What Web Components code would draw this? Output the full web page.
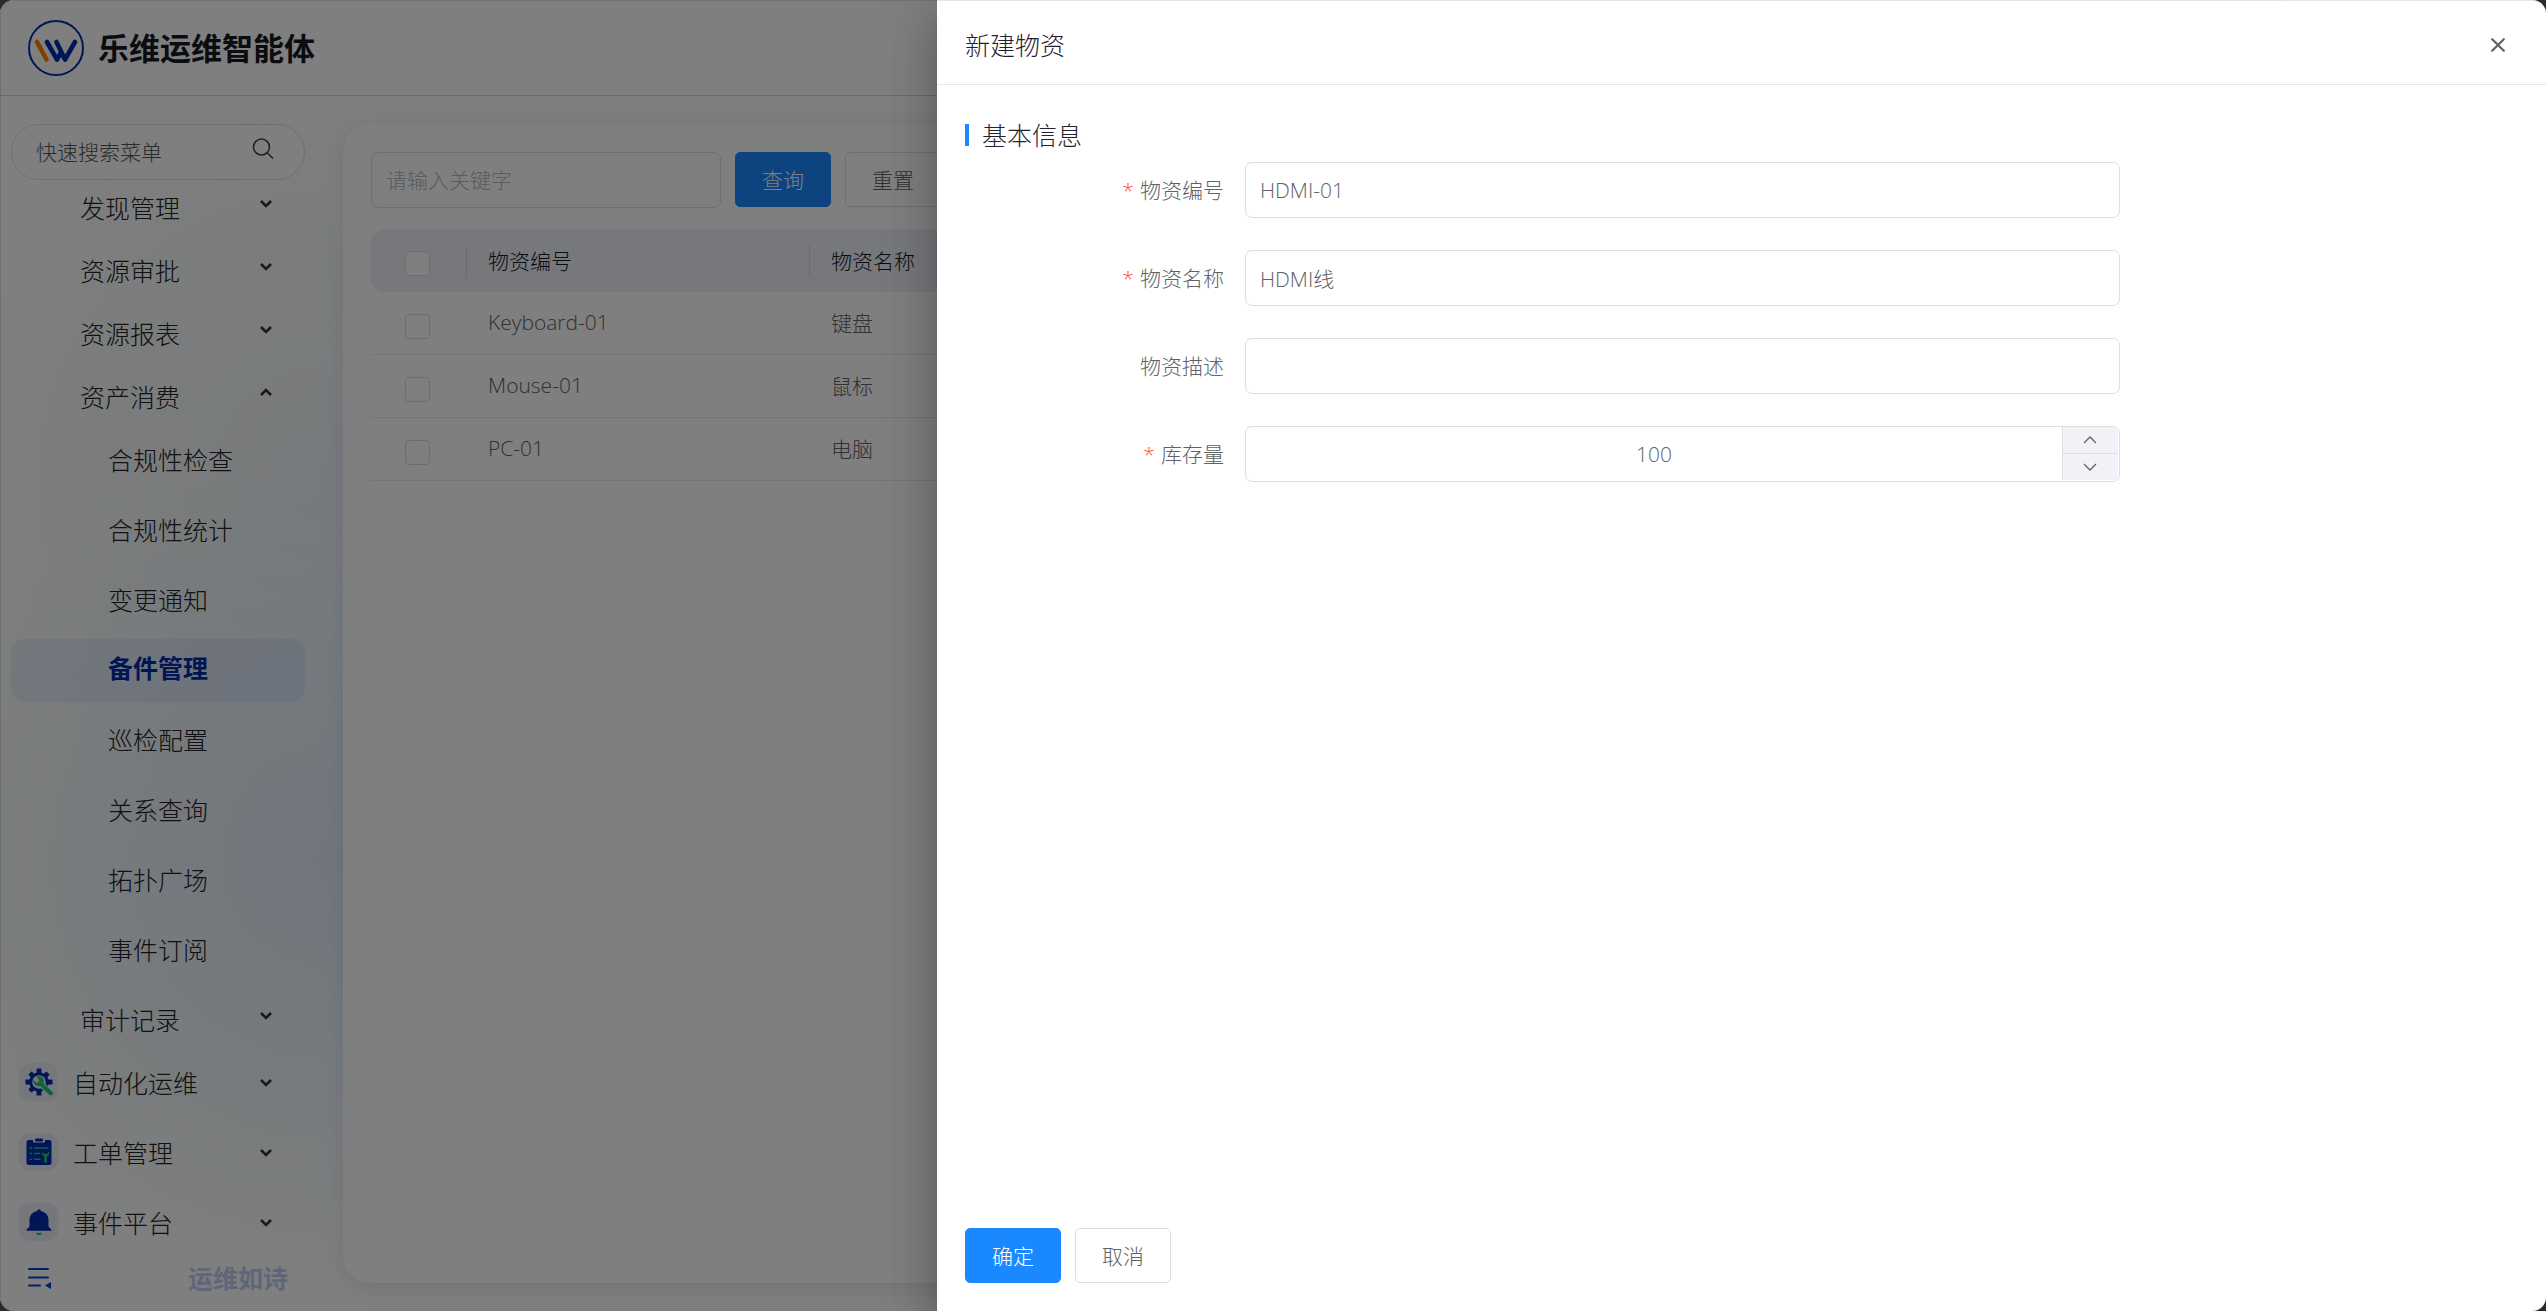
<!DOCTYPE html>
<html lang="zh-CN">
<head>
<meta charset="UTF-8">
<meta name="viewport" content="width=device-width, initial-scale=1.0">
<title>乐维运维智能体</title>
<style>
  :root {
    --primary: #1a88ff;
    --brand: #002cac;
    --accent: #1ec878;
    --tile: #eceefa;
    --border: #dcdee0;
    --text: #606266;
    --text-dark: #1f2330;
    --fs: 21px;
    --fs-lg: 25px;
  }
  html, body {
    margin: 0;
    height: 100%;
    background: #2b2b2b;
  }
  body {
    font-family: "Open Sans", "Noto Sans CJK SC", sans-serif;
    font-weight: 300;
    font-size: var(--fs);
    color: var(--text);
  }
</style>
</head>
<body>

<app-shell>
  <app-header slot="header"></app-header>
  <side-nav slot="nav">
    <nav-item level="2" arrow="down">发现管理</nav-item>
    <nav-item level="2" arrow="down">资源审批</nav-item>
    <nav-item level="2" arrow="down">资源报表</nav-item>
    <nav-item level="2" arrow="up">资产消费</nav-item>
    <nav-item level="3">合规性检查</nav-item>
    <nav-item level="3">合规性统计</nav-item>
    <nav-item level="3">变更通知</nav-item>
    <nav-item level="3" active>备件管理</nav-item>
    <nav-item level="3">巡检配置</nav-item>
    <nav-item level="3">关系查询</nav-item>
    <nav-item level="3">拓扑广场</nav-item>
    <nav-item level="3">事件订阅</nav-item>
    <nav-item level="2" arrow="down">审计记录</nav-item>
    <nav-item level="1" arrow="down" icon="gear">自动化运维</nav-item>
    <nav-item level="1" arrow="down" icon="order">工单管理</nav-item>
    <nav-item level="1" arrow="down" icon="bell">事件平台</nav-item>
  </side-nav>
  <stock-page></stock-page>
  <side-drawer slot="drawer" heading="新建物资">
    <form-section heading="基本信息">
      <form-field label="物资编号" value="HDMI-01" required></form-field>
      <form-field label="物资名称" value="HDMI线" required></form-field>
      <form-field label="物资描述"></form-field>
      <form-field label="库存量" value="100" type="number" required></form-field>
    </form-section>
    <ui-button slot="footer" type="primary">确定</ui-button>
    <ui-button slot="footer">取消</ui-button>
  </side-drawer>
</app-shell>

<script>
// Small base class: every component renders its markup once into a shadow root
class BaseElement extends HTMLElement {
  connectedCallback() {
    if (this.shadowRoot) return;
    this.attachShadow({ mode: "open" });
    this.shadowRoot.innerHTML = this.render();
  }
}

const NAV_ICONS = {
  gear: `
    <svg viewBox="0 0 28 28" width="28" height="28">
      <g fill="var(--brand)">
        <circle cx="14" cy="14" r="9.8"/>
        <rect x="11.6" y="0.5" width="4.8" height="27" rx="0.6"/>
        <rect x="0.5" y="11.6" width="27" height="4.8" rx="0.6"/>
        <rect x="11.6" y="1.2" width="4.8" height="25.6" rx="0.6" transform="rotate(45 14 14)"/>
        <rect x="11.6" y="1.2" width="4.8" height="25.6" rx="0.6" transform="rotate(135 14 14)"/>
      </g>
      <circle cx="14" cy="14" r="6.8" fill="var(--tile)"/>
      <path d="M15 15L26 25.600" stroke="var(--tile)" stroke-width="6.400"/>
      <path d="M15 15L25.600 25.200" stroke="var(--accent)" stroke-width="4.400" stroke-linecap="round"/>
      <path d="M11.300 8.900l3.200 3-.6 2.400-2.500.5-2.900-3c-.7 3.200 1.500 6.200 4.700 6.300 3.300.2 6-2.300 5.800-5.500-.2-3.200-3.900-5.300-7.700-3.700z" fill="var(--accent)"/>
    </svg>`,
  order: `
    <svg viewBox="0 0 28 28" width="28" height="28">
      <rect x="1.500" y="2" width="25" height="25" rx="2.500" fill="var(--brand)"/>
      <path d="M8 1.200h12v2a1.200 1.200 0 0 1-1.200 1.200H9.200a1.200 1.200 0 0 1-1.200-1.200z" fill="var(--tile)"/>
      <rect x="10" y="0.600" width="8" height="2.800" rx="1" fill="var(--brand)"/>
      <g stroke="var(--accent)" stroke-width="1.500" fill="none">
        <path d="M4.500 10h2.600M9 10h14.500M4.500 15.600h2.600M9 15.600h6.500M4.500 21.200h2.600M9 21.200h6.500"/>
      </g>
      <path d="M17 13.500c-.5 2.500.7 4.300 2.300 5v5.200a1.200 1.200 0 0 0 2.600 0v-5.200c1.700-.8 2.700-2.600 2.200-5l-1.900 2.300h-3.200z" fill="var(--accent)"/>
    </svg>`,
  bell: `
    <svg viewBox="0 0 28 28" width="28" height="28">
      <path d="M14 1.200a1.800 1.800 0 0 1 1.800 1.900c4.600.9 7.700 4.300 7.700 9v6.500l2.800 3c.5.600.2 1.200-.6 1.200H2.300c-.8 0-1.100-.6-.6-1.200l2.800-3v-6.500c0-4.700 3.100-8.100 7.700-9A1.800 1.800 0 0 1 14 1.200z" fill="var(--brand)"/>
      <path d="M11 24.800h6c-.3 1.600-1.400 2.500-3 2.500s-2.700-.9-3-2.500z" fill="var(--accent)"/>
    </svg>`
};

class AppShell extends BaseElement {
  render() {
    return `
      <style>
        :host {
          display: grid;
          grid-template-rows: auto 1fr;
          height: 100vh;
          position: relative;
          overflow: hidden;
          border-radius: 14px;
          background:
            radial-gradient(circle at 330px 860px, #e2ecfb 0, rgba(230, 240, 250, 0.7) 180px, rgba(242, 248, 252, 0) 420px),
            radial-gradient(circle at 330px 480px, #eff5f8 0, rgba(244, 250, 251, 0) 380px),
            #fcfefc;
        }
        .body {
          display: flex;
          min-height: 0;
        }
        main {
          flex: 1;
          min-width: 0;
          display: flex;
          padding: 28px 28px 28px 0;
        }
        ::slotted(stock-page) {
          flex: 1;
        }
        .mask {
          position: absolute;
          inset: 0;
          background: rgba(0, 0, 0, 0.5);
          display: flex;
          justify-content: flex-end;
        }
        .frame {
          position: absolute;
          inset: 0;
          border: 1px solid rgba(0, 0, 0, 0.1);
          border-right: 0;
          border-bottom: 0;
          border-radius: 14px;
          pointer-events: none;
        }
      </style>
      <slot name="header"></slot>
      <div class="body">
        <slot name="nav"></slot>
        <main><slot></slot></main>
      </div>
      <div class="mask"><slot name="drawer"></slot></div>
      <div class="frame"></div>
    `;
  }
}

class AppHeader extends BaseElement {
  render() {
    return `
      <style>
        :host { display: block; }
        header {
          display: flex;
          align-items: center;
          gap: 14px;
          height: 95px;
          padding: 0 28px;
          border-bottom: 1px solid #d2d5d6;
        }
        h1 {
          margin: 0;
          font-size: 31px;
          font-weight: 700;
          line-height: 44px;
          color: #16191f;
        }
        svg { display: block; }
      </style>
      <header>
        <svg viewBox="0 0 56 56" width="56" height="56" fill="none" stroke-linecap="round" stroke-linejoin="round">
          <circle cx="28" cy="28" r="27" stroke="var(--brand)" stroke-width="2"/>
          <path d="M9 22l9.500 17.500" stroke="#ff8000" stroke-width="4.600"/>
          <path d="M19 22l10 17.500M28.500 22l8.500 17.500M29 39.500l4-7M37 39.500l10-17.500" stroke="var(--brand)" stroke-width="4.600"/>
        </svg>
        <h1>乐维运维智能体</h1>
      </header>
    `;
  }
}

class SideNav extends BaseElement {
  render() {
    return `
      <style>
        :host {
          display: flex;
          flex-direction: column;
          flex: none;
          width: 343px;
          min-height: 0;
        }
        .search {
          display: flex;
          align-items: center;
          box-sizing: border-box;
          height: 56px;
          margin: 28px 38px 0 11px;
          padding: 0 30px 0 24px;
          border: 1px solid var(--border);
          border-radius: 28px;
          background: #fff;
          flex: none;
        }
        .search input {
          flex: 1;
          min-width: 0;
          border: 0;
          padding: 0;
          outline: 0;
          background: none;
          font: inherit;
          color: #555;
        }
        .search input::placeholder { color: #555; opacity: 1; }
        .search svg { margin-bottom: 6px; }
        nav {
          flex: 1;
          min-height: 0;
          overflow: hidden;
          display: flex;
          flex-direction: column;
          justify-content: flex-end;
          padding: 0 38px 0 11px;
        }
        footer {
          display: flex;
          align-items: center;
          justify-content: space-between;
          height: 32px;
          padding: 0 55px 17px 28px;
        }
        footer button {
          border: 0;
          padding: 0;
          background: none;
          line-height: 0;
        }
        footer a {
          font-size: var(--fs-lg);
          font-weight: 700;
          line-height: 32px;
          color: #c0cdf2;
          text-decoration: none;
        }
      </style>
      <div class="search">
        <input type="text" placeholder="快速搜索菜单" aria-label="快速搜索菜单">
        <svg viewBox="0 0 22 22" width="22" height="22" fill="none" stroke="#444" stroke-width="1.600">
          <circle cx="9.500" cy="9" r="8"/>
          <path d="M15.200 14.700L21 20.500"/>
        </svg>
      </div>
      <nav><slot></slot></nav>
      <footer>
        <button type="button" aria-label="收起菜单">
          <svg viewBox="0 0 24 22" width="24" height="22" fill="none" stroke="#0040d0" stroke-width="2" stroke-linecap="round">
            <path d="M1 2h19M1 10.500h19M1 18.500h11"/>
            <path d="M23 15v7l-6-3.500z" fill="#0040d0" stroke="none"/>
          </svg>
        </button>
        <a href="#">运维如诗</a>
      </footer>
    `;
  }
}

class NavItem extends BaseElement {
  render() {
    const level = this.getAttribute("level");
    const arrow = this.getAttribute("arrow");
    const icon = this.getAttribute("icon");
    const path = arrow === "up" ? "M2 7l5-5 5 5" : "M2 2l5 5 5-5";
    const tag = arrow ? "button" : "a";
    const attr = arrow ? `type="button" aria-expanded="${arrow === "up"}"` : `href="#"`;
    return `
      <style>
        :host { display: block; flex: none; }
        :host([level="1"]), :host([level="3"]) { margin-bottom: 7px; }
        .item {
          display: flex;
          align-items: center;
          box-sizing: border-box;
          width: 100%;
          height: 63px;
          border: 0;
          border-radius: 14px;
          background: none;
          font: inherit;
          font-size: var(--fs-lg);
          text-align: left;
          text-decoration: none;
          color: #222;
          padding: 0 32px 0 97px;
        }
        :host([level="1"]) .item { padding-left: 8px; }
        :host([level="2"]) .item { padding-left: 69px; }
        :host([active]) .item {
          background: rgba(40, 90, 230, 0.08);
          color: #002ca8;
          font-weight: 700;
        }
        .tile {
          display: flex;
          align-items: center;
          justify-content: center;
          width: 39px;
          height: 38px;
          margin: 0 15px 4px 0;
          border-radius: 11px;
          background: var(--tile);
        }
        .label { flex: 1; padding-bottom: 4px; }
        :host([active]) .label { padding-bottom: 8px; }
        .arrow { flex: none; margin-bottom: 3px; }
        :host([level="2"]) .arrow { margin-bottom: 11px; }
      </style>
      <${tag} class="item" ${attr}>
        ${icon ? `<span class="tile">${NAV_ICONS[icon]}</span>` : ""}
        <span class="label"><slot></slot></span>
        ${arrow ? `<svg class="arrow" viewBox="0 0 14 9" width="14" height="9" fill="none" stroke="#333" stroke-width="2.600"><path d="${path}"/></svg>` : ""}
      </${tag}>
    `;
  }
}

class UiButton extends BaseElement {
  render() {
    return `
      <style>
        :host { display: inline-block; flex: none; }
        button {
          display: block;
          box-sizing: border-box;
          height: 55px;
          padding: 0 26px 2px;
          border: 1px solid var(--border);
          border-radius: 5px;
          background: #fff;
          font: inherit;
          font-size: var(--fs);
          color: var(--text);
        }
        :host([type="primary"]) button {
          border-color: var(--primary);
          background: var(--primary);
          color: #fff;
        }
      </style>
      <button type="button"><slot></slot></button>
    `;
  }
}

class StockPage extends BaseElement {
  render() {
    const rows = [
      ["Keyboard-01", "键盘"],
      ["Mouse-01", "鼠标"],
      ["PC-01", "电脑"]
    ];
    return `
      <style>
        :host {
          display: block;
          box-sizing: border-box;
          padding: 28px;
          border-radius: 28px;
          background: #fff;
          box-shadow: 0 4px 20px rgba(60, 100, 160, 0.14);
        }
        .toolbar {
          display: flex;
          gap: 14px;
          margin-bottom: 21px;
        }
        .toolbar input {
          box-sizing: border-box;
          width: 350px;
          height: 56px;
          padding: 0 14px;
          border: 1px solid var(--border);
          border-radius: 7px;
          background: #fff;
          font: inherit;
        }
        .toolbar input::placeholder { color: #b4b7bd; opacity: 1; }
        table {
          width: 100%;
          table-layout: fixed;
          border-collapse: separate;
          border-spacing: 0;
        }
        th, td {
          box-sizing: border-box;
          height: 63px;
          padding: 0 21px 2px;
          text-align: left;
          font-weight: 300;
        }
        td { border-bottom: 1px solid #e8eaec; }
        th {
          background:
            linear-gradient(#d4d7de, #d4d7de) right center / 1px 32px no-repeat,
            #eef0f9;
          color: #16191f;
        }
        th:first-child { border-radius: 14px 0 0 14px; }
        th:last-child { border-radius: 0 14px 14px 0; background: #eef0f9; }
        .check { width: 96px; padding: 3px 3px 0 0; text-align: center; }
        .check input {
          appearance: none;
          display: inline-block;
          vertical-align: middle;
          box-sizing: border-box;
          width: 25px;
          height: 25px;
          margin: 0;
          border: 1px solid #d8dade;
          border-radius: 4px;
          background: #fff;
        }
        .code { width: 343px; }
      </style>
      <div class="toolbar">
        <input type="text" placeholder="请输入关键字" aria-label="关键字">
        <ui-button type="primary">查询</ui-button>
        <ui-button>重置</ui-button>
      </div>
      <table>
        <thead>
          <tr>
            <th class="check"><input type="checkbox" aria-label="全选"></th>
            <th class="code">物资编号</th>
            <th>物资名称</th>
          </tr>
        </thead>
        <tbody>
          ${rows.map(([code, name]) => `
            <tr>
              <td class="check"><input type="checkbox" aria-label="${code}"></td>
              <td>${code}</td>
              <td>${name}</td>
            </tr>`).join("")}
        </tbody>
      </table>
    `;
  }
}

class SideDrawer extends BaseElement {
  render() {
    return `
      <style>
        :host {
          display: flex;
          flex-direction: column;
          width: 63.2%;
          background: #fff;
          box-shadow: 0 14px 18px -9px rgba(0, 0, 0, 0.2), 0 28px 42px 4px rgba(0, 0, 0, 0.14), 0 10px 52px 9px rgba(0, 0, 0, 0.12);
        }
        header {
          display: flex;
          align-items: center;
          justify-content: space-between;
          box-sizing: border-box;
          height: 85px;
          padding: 6px 41px 0 28px;
          border-bottom: 1px solid #e4e5e7;
        }
        h2 {
          margin: 0;
          font-size: var(--fs-lg);
          font-weight: 300;
          line-height: 36px;
          color: var(--text-dark);
        }
        header button {
          border: 0;
          padding: 0;
          background: none;
          line-height: 0;
        }
        .content {
          flex: 1;
          padding: 32px 41px 0 28px;
        }
        footer {
          display: flex;
          gap: 14px;
          padding: 28px;
        }
      </style>
      <header>
        <h2>${this.getAttribute("heading")}</h2>
        <button type="button" aria-label="关闭">
          <svg viewBox="0 0 14 14" width="14" height="14" fill="none" stroke="#606266" stroke-width="2.200" stroke-linecap="round">
            <path d="M1.200 1.200l11.600 11.600M12.800 1.200L1.200 12.800"/>
          </svg>
        </button>
      </header>
      <div class="content"><slot></slot></div>
      <footer><slot name="footer"></slot></footer>
    `;
  }
}

class FormSection extends BaseElement {
  render() {
    return `
      <style>
        :host { display: block; }
        h3 {
          display: flex;
          align-items: center;
          gap: 13px;
          margin: 0 0 9px;
          font-size: var(--fs-lg);
          font-weight: 300;
          line-height: 36px;
          color: var(--text-dark);
        }
        h3::before {
          content: "";
          width: 4px;
          height: 22px;
          background: var(--primary);
        }
        .rows {
          display: flex;
          flex-direction: column;
          gap: 32px;
          width: 75%;
        }
      </style>
      <h3>${this.getAttribute("heading")}</h3>
      <div class="rows"><slot></slot></div>
    `;
  }
}

class FormField extends BaseElement {
  render() {
    const value = this.getAttribute("value") || "";
    const isNumber = this.getAttribute("type") === "number";
    const chevron = (d) => `<svg viewBox="0 0 14 8" width="14" height="8" fill="none" stroke="#606266" stroke-width="1.300"><path d="${d}"/></svg>`;
    return `
      <style>
        :host { display: flex; align-items: center; }
        label {
          box-sizing: border-box;
          flex: none;
          width: 280px;
          padding: 0 21px 2px 0;
          text-align: right;
        }
        :host([required]) label::before {
          content: "*";
          margin-right: 6px;
          color: #ff4a3d;
        }
        .box {
          display: flex;
          flex: 1;
          min-width: 0;
          box-sizing: border-box;
          height: 56px;
          border: 1px solid var(--border);
          border-radius: 7px;
          overflow: hidden;
        }
        input {
          flex: 1;
          min-width: 0;
          padding: 0 14px;
          border: 0;
          outline: 0;
          background: none;
          font: inherit;
          color: var(--text);
        }
        input[type="number"] { text-align: center; appearance: textfield; }
        input::-webkit-inner-spin-button { appearance: none; margin: 0; }
        .step {
          display: flex;
          flex-direction: column;
          width: 55px;
          margin: 0 1px 1px 0;
          border-left: 1px solid var(--border);
        }
        .step button {
          flex: 1;
          display: flex;
          align-items: center;
          justify-content: center;
          border: 0;
          padding: 0;
          background: #f0f2f8;
        }
        .step button + button { border-top: 1px solid var(--border); }
      </style>
      <label for="field">${this.getAttribute("label")}</label>
      <div class="box">
        <input id="field" type="${isNumber ? "number" : "text"}" value="${value}">
        ${isNumber ? `
        <div class="step">
          <button type="button" aria-label="增加">${chevron("M1 7l6-6 6 6")}</button>
          <button type="button" aria-label="减少">${chevron("M1 1l6 6 6-6")}</button>
        </div>` : ""}
      </div>
    `;
  }
}

customElements.define("ui-button", UiButton);
customElements.define("app-shell", AppShell);
customElements.define("app-header", AppHeader);
customElements.define("side-nav", SideNav);
customElements.define("nav-item", NavItem);
customElements.define("stock-page", StockPage);
customElements.define("side-drawer", SideDrawer);
customElements.define("form-section", FormSection);
customElements.define("form-field", FormField);
</script>
</body>
</html>
